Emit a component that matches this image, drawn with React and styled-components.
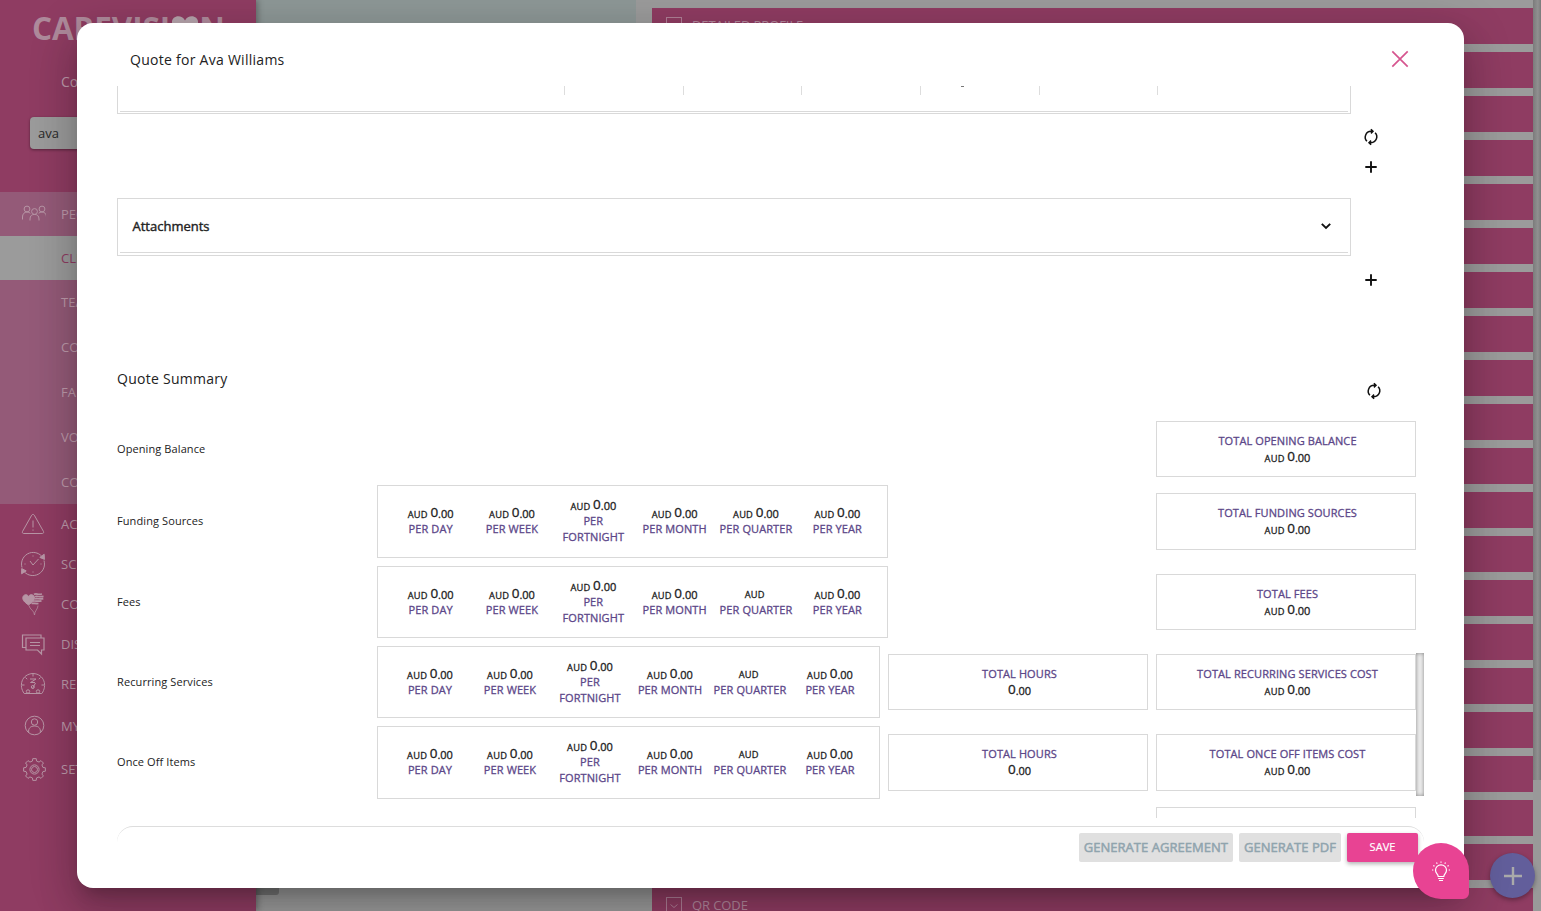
import React from "react";
import styled, { createGlobalStyle } from "styled-components";

const gearPath = (cx, cy, outer, inner, teeth) => {
  const step = (Math.PI * 2) / teeth;
  const points = [];
  for (let i = 0; i < teeth; i++) {
    const a = i * step - Math.PI / 2;
    [
      [-0.3, inner],
      [-0.2, outer],
      [0.2, outer],
      [0.3, inner],
    ].forEach(([shift, r]) => {
      const t = a + shift * step;
      points.push(
        `${(cx + r * Math.cos(t)).toFixed(2)} ${(cy + r * Math.sin(t)).toFixed(2)}`
      );
    });
  }
  return `M${points.join("L")}Z`;
};

const PeopleIcon = () => (
  <LineIcon width="26" height="26" viewBox="-1.500 0 26 26">
    <circle cx="5.5" cy="8" r="2.9" />
    <circle cx="13" cy="10.5" r="2.9" />
    <circle cx="20.5" cy="8" r="2.9" />
    <path d="M1 18.500v-2.500c0-3 1.800-5 4.500-5 1.400 0 2.600.5 3.300 1.300M8.500 19.500v-1.500c0-3 1.700-4.600 4.500-4.600s4.500 1.600 4.500 4.600v1.500M17.200 12.300c.7-.8 1.900-1.300 3.300-1.300 2.700 0 4.500 2 4.500 5v2.500" />
  </LineIcon>
);

const AlertIcon = () => (
  <LineIcon width="26" height="26" viewBox="0 0 26 26">
    <path d="M11.700 4.200 2.500 20.500c-.5 1 0 2 1.200 2h18.600c1.200 0 1.700-1 1.200-2L14.300 4.200c-.6-1-2-1-2.600 0zM13 9.500v7M13 18.500v1.200" />
  </LineIcon>
);

const ScheduleIcon = () => (
  <LineIcon width="26" height="26" viewBox="0 0 26 26">
    <path d="M2 16.500C.2 10.500 3.500 4 9.500 2 14.500.4 20 2.300 22.800 6.600M24 9.500c1.800 6-1.300 12.300-7.300 14.400C11.600 25.600 6 23.800 3.200 19.400M10 10l3 4 5.500-6M13 4.500v1M4.500 13h1M20.500 13h1M13 20.500v1" />
    <path d="m24.200 3.200.3 5.200-4.700-2zM1.600 22.800l.1-5.200 4.500 2.300z" fill="currentColor" />
  </LineIcon>
);

const HeartsIcon = () => (
  <LineIcon width="26" height="26" viewBox="0 0 26 26">
    <path
      d="M8.500 14C4.500 11 2.800 9.500 2.800 6.900c0-3.500 4.500-4.400 5.700-1.300 1.300-3.100 6-2.200 6 1.300 0 2.600-2 4.100-6 7.100z"
      fill="currentColor"
    />
    <path d="M14 3.500c2-1.500 3.500.5 8-.5M15 5.700c2-1 4 .6 8.500-.3M15 8c2-1 4 .6 8.300-.4M13 10.300c2-1 4 .6 8.500-.4M11.500 12.500c2-.6 3 .3 7 0" strokeWidth="1.700" />
    <path d="M9 14.500c.5 4 5.500 5 5.500 9.500 0-4 3.500-6 3.500-9.500" strokeWidth=".7" />
  </LineIcon>
);

const ChatIcon = () => (
  <LineIcon width="26" height="26" viewBox="0 0 26 26">
    <path d="M5.500 16.500h-3v-12.500h18.500v3M6 7h18v12h-2.500v4l-4-4H6zM10 11.500h10M10 14.500h10" strokeWidth="1.200" />
  </LineIcon>
);

const GaugeIcon = () => (
  <LineIcon width="26" height="26" viewBox="0 0 26 26">
    <path d="M4.200 22.500C-1.500 15 1.500 3 13 2.500 24.500 3 27.500 15 21.800 22.500zM13 3v2.500M5.500 6.500l1.700 1.700M20.500 6.500l-1.700 1.700M2 14h2.500M21.500 14H24M10 8h6l-5.500 3.500H15M15.500 12l-3 5.500" />
    <circle cx="8" cy="20.500" r="1.700" />
    <circle cx="12.800" cy="16" r="1.500" />
    <circle cx="18" cy="20.500" r="1.700" />
  </LineIcon>
);

const UserIcon = () => (
  <LineIcon width="26" height="26" viewBox="0 0 26 26">
    <circle cx="14.500" cy="12.500" r="9.300" />
    <circle cx="14.500" cy="9" r="3.200" />
    <path d="M8.700 19.500c-.6-4 1.600-6.500 5.800-6.500s6.400 2.500 5.800 6.500" />
  </LineIcon>
);

const GearIcon = () => (
  <LineIcon width="26" height="26" viewBox="0 0 26 26">
    <path d={gearPath(14.5, 13.5, 11, 8.700, 8)} />
    <circle cx="14.500" cy="13.500" r="4.600" />
    <circle cx="14.500" cy="13.500" r="3" />
  </LineIcon>
);

const RefreshIcon = () => (
  <svg width="18" height="18" viewBox="0 0 18 18" fill="none" stroke="#111" strokeWidth="1.500">
    <path d="M4.900 13.300A5.900 5.900 0 0 1 9 3.300h1.800M8.900 1.200 11 3.300 8.900 5.400" />
    <path d="M13.100 4.700a5.900 5.900 0 0 1-4.100 10H7.200M9.100 16.800 7 14.700l2.100-2.100" />
  </svg>
);

const PlusIcon = () => (
  <svg width="18" height="18" viewBox="0 0 18 18" stroke="#111" strokeWidth="1.900">
    <path d="M9 3.300v11.400M3.300 9h11.400" />
  </svg>
);

const CloseIcon = () => (
  <svg width="18" height="18" viewBox="0 0 18 18" stroke="#d6558f" strokeWidth="1.700">
    <path d="m1.300 1.300 15.400 15.400M16.700 1.300 1.300 16.700" />
  </svg>
);

const ChevronIcon = () => (
  <svg width="12" height="12" viewBox="0 0 12 12" fill="none" stroke="#111" strokeWidth="1.900">
    <path d="m1.800 3.800 4.200 4.200 4.200-4.200" />
  </svg>
);

const BulbIcon = () => (
  <svg width="22" height="22" viewBox="0 0 22 22" fill="none" stroke="#fff" strokeWidth="1.200">
    <path d="M8.200 15.500c0-2.300-2.700-3-2.700-6.200a5.500 5.500 0 0 1 11 0c0 3.200-2.700 3.900-2.700 6.200zM8.200 17.500h5.600M9 19.500h4" />
    <path d="M11 .5v1.300M6.500 1.500l.7 1.200M15.500 1.500l-.7 1.200M3.300 4.500l1.200.8M18.700 4.500l-1.200.8M2 9h1.300M18.700 9H20" />
  </svg>
);

const BoxedChevron = () => (
  <svg width="16" height="16" viewBox="0 0 16 16" fill="none" stroke="#b07f97">
    <rect x=".5" y=".5" width="15" height="15" />
    <path d="m4.500 7.500 3.500 3 3.500-3" />
  </svg>
);

const SUB_MENU = ["TEA", "CO", "FA", "VO", "CO"];

const MENU = [
  { label: "AC", icon: <AlertIcon /> },
  { label: "SC", icon: <ScheduleIcon /> },
  { label: "CO", icon: <HeartsIcon /> },
  { label: "DIS", icon: <ChatIcon /> },
  { label: "RE", icon: <GaugeIcon /> },
  { label: "MY", icon: <UserIcon />, height: 44 },
  { label: "SET", icon: <GearIcon />, height: 42 },
];

const PERIODS = ["DAY", "WEEK", "FORTNIGHT", "MONTH", "QUARTER", "YEAR"];

const ROWS = [
  { name: "Opening Balance", total: "TOTAL OPENING BALANCE" },
  { name: "Funding Sources", total: "TOTAL FUNDING SOURCES", periods: true },
  { name: "Fees", total: "TOTAL FEES", periods: true, noQuarter: true },
  {
    name: "Recurring Services",
    total: "TOTAL RECURRING SERVICES COST",
    periods: true,
    noQuarter: true,
    hours: true,
  },
  {
    name: "Once Off Items",
    total: "TOTAL ONCE OFF ITEMS COST",
    periods: true,
    noQuarter: true,
    hours: true,
  },
];

const PANELS = Array.from({ length: 21 }, (_, i) => {
  if (i === 0) return "DETAILED PROFILE";
  if (i === 20) return "QR CODE";
  return "";
});

const Money = ({ currency = true, empty }) => (
  <Amount>
    {currency && <Currency>AUD </Currency>}
    {!empty && (
      <>
        <Whole>0</Whole>
        <Cents>.00</Cents>
      </>
    )}
  </Amount>
);

const Sidebar = () => (
  <Side>
    <Logo>
      CAREVISI
      <svg width="28" height="25" viewBox="0 0 30 26">
        <path
          d="M15 25C6 17 1 13 1 7.500 1 0 11.500-1.500 15 5.500 18.500-1.500 29 0 29 7.500 29 13 24 17 15 25z"
          fill="#b5a3ab"
        />
      </svg>
      N
    </Logo>
    <Company>Co</Company>
    <SearchBox>ava</SearchBox>
    <Group>
      <Item $height={44}>
        <PeopleIcon />
        <span>PEO</span>
      </Item>
      <Item $height={44} $active>
        <span>CLI</span>
      </Item>
      {SUB_MENU.map((label, i) => (
        <Item key={i} $height={44.8}>
          <span>{label}</span>
        </Item>
      ))}
    </Group>
    {MENU.map(({ label, icon, height }) => (
      <Item key={label} $height={height || 40}>
        {icon}
        <span>{label}</span>
      </Item>
    ))}
  </Side>
);

const SummaryRow = ({ row }) => (
  <Row $tall={row.periods}>
    <RowName>{row.name}</RowName>
    {row.periods && (
      <PeriodBox $narrow={row.hours}>
        {PERIODS.map((period) => (
          <Period key={period}>
            <Money empty={row.noQuarter && period === "QUARTER"} />
            <Caption>PER {period}</Caption>
          </Period>
        ))}
      </PeriodBox>
    )}
    <Totals>
      {row.hours && (
        <TotalBox>
          <Caption>TOTAL HOURS</Caption>
          <Money currency={false} />
        </TotalBox>
      )}
      <TotalBox>
        <Caption>{row.total}</Caption>
        <Money />
      </TotalBox>
    </Totals>
  </Row>
);

const QuoteModal = () => (
  <Modal>
    <ModalHeader>
      <Title>Quote for Ava Williams</Title>
      <CloseIcon />
    </ModalHeader>
    <ModalBody>
      <TableEnd>
        <Columns>
          <span />
          <span />
          <span />
          <span />
          <span />
          <span />
        </Columns>
        <Speck />
      </TableEnd>
      <Actions $height={84} $top={14}>
        <RefreshIcon />
        <PlusIcon />
      </Actions>
      <Attachments>
        <div>
          Attachments
          <ChevronIcon />
        </div>
      </Attachments>
      <Actions $height={105} $top={15}>
        <PlusIcon />
      </Actions>
      <SummaryHead>
        <Title>Quote Summary</Title>
        <RefreshIcon />
      </SummaryHead>
      <Summary>
        {ROWS.map((row) => (
          <SummaryRow key={row.name} row={row} />
        ))}
        <Row>
          <Totals>
            <TotalBox />
          </Totals>
        </Row>
      </Summary>
    </ModalBody>
    <ModalFooter>
      <Button>GENERATE AGREEMENT</Button>
      <Button>GENERATE PDF</Button>
      <SaveButton>SAVE</SaveButton>
    </ModalFooter>
    <InnerScroll />
  </Modal>
);

const App = () => (
  <Page>
    <GlobalStyle />
    <Sidebar />
    <Middle>
      <Photo />
      <Tab />
    </Middle>
    <Panels>
      {PANELS.map((label, i) => (
        <Panel key={i}>
          {label && <BoxedChevron />}
          {label}
        </Panel>
      ))}
    </Panels>
    <PageScroll>
      <div />
    </PageScroll>
    <AddFab>
      <svg width="18" height="18" viewBox="0 0 18 18" stroke="#aaa" strokeWidth="2.400">
        <path d="M9 0v18M0 9h18" />
      </svg>
    </AddFab>
    <QuoteModal />
    <BulbFab>
      <BulbIcon />
    </BulbFab>
  </Page>
);

const GlobalStyle = createGlobalStyle`
  * {
    box-sizing: border-box;
  }
  body {
    margin: 0;
    overflow: hidden;
    font-family: "Open Sans", "Noto Sans", sans-serif;
    color: #222;
  }
  svg {
    flex-shrink: 0;
  }
`;

const Page = styled.div`
  position: relative;
  display: flex;
  height: 911px;
  overflow: hidden;
  background: #9b9b9b;
`;

const Side = styled.aside`
  width: 256px;
  background: #8f3c62;
  color: #be9bab;
  box-shadow: 2px 0 6px rgba(0, 0, 0, 0.3);
  z-index: 1;
`;

const LineIcon = styled.svg`
  fill: none;
  stroke: currentColor;
  color: #b795a5;
`;

const Logo = styled.div`
  display: flex;
  align-items: center;
  height: 54px;
  padding-left: 32px;
  font-size: 31.500px;
  font-weight: 700;
  letter-spacing: -0.1px;
  color: #ae8a9b;
  svg {
    margin: 0 0 0 1px;
  }
`;

const Company = styled.div`
  height: 63px;
  padding: 18px 0 0 61px;
  font-size: 14px;
  line-height: 20px;
`;

const SearchBox = styled.div`
  width: 196px;
  height: 32px;
  margin: 0 30px 43px;
  padding-left: 8px;
  border-radius: 4px;
  background: #9b9b9b;
  box-shadow: 0 1px 3px rgba(0, 0, 0, 0.4);
  color: #2a2a2a;
  font-size: 13px;
  line-height: 32px;
`;

const Group = styled.div`
  background: #945a78;
`;

const Item = styled.div`
  display: flex;
  align-items: center;
  height: ${(props) => props.$height}px;
  padding-left: 20px;
  font-size: 13px;
  background: ${(props) => (props.$active ? "#9b9b9b" : "none")};
  color: ${(props) => (props.$active ? "#8f3c62" : "inherit")};
  span {
    margin-left: 15px;
  }
  span:first-child {
    margin-left: 41px;
  }
`;

const Middle = styled.div`
  width: 396px;
  display: flex;
  flex-direction: column;
  justify-content: space-between;
`;

const Photo = styled.div`
  width: 380px;
  height: 60px;
  background: #8d9796;
`;

const Tab = styled.div`
  width: 23px;
  height: 40px;
  margin-bottom: 16px;
  border-radius: 0 0 3px 0;
  background: #777;
`;

const Panels = styled.div`
  width: 881px;
  padding-top: 8px;
`;

const Panel = styled.div`
  display: flex;
  align-items: center;
  gap: 10px;
  height: 36px;
  margin-bottom: 8px;
  padding: 0 0 2px 14px;
  background: #8f3c62;
  color: #b48a9e;
  font-size: 13px;
  letter-spacing: -0.1px;
`;

const PageScroll = styled.div`
  width: 8px;
  background: #999;
  div {
    height: 780px;
    background: linear-gradient(90deg, #7b7b7b, #909090 60%, #7b7b7b);
  }
`;

const AddFab = styled.div`
  position: absolute;
  left: 1490px;
  top: 853px;
  display: flex;
  align-items: center;
  justify-content: center;
  width: 45px;
  height: 45px;
  border-radius: 50%;
  background: #625e9b;
  box-shadow: 0 2px 5px rgba(0, 0, 0, 0.35);
`;

const Modal = styled.div`
  position: absolute;
  left: 77px;
  top: 23px;
  z-index: 2;
  width: 1387px;
  height: 865px;
  padding-left: 40px;
  border-radius: 16px;
  background: #fff;
  box-shadow: 0 11px 15px -7px rgba(0, 0, 0, 0.2),
    0 24px 38px 3px rgba(0, 0, 0, 0.14), 0 9px 46px 8px rgba(0, 0, 0, 0.12);
`;

const ModalHeader = styled.div`
  display: flex;
  justify-content: space-between;
  height: 63px;
  padding: 27px 55px 0 13px;
`;

const Title = styled.div`
  font-size: 14px;
  line-height: 20px;
  letter-spacing: 0.27px;
`;

const ModalBody = styled.div`
  height: 732px;
  overflow: hidden;
`;

const TableEnd = styled.div`
  position: relative;
  width: 1234px;
  height: 28px;
  padding: 0 2px 2px;
  border: 1px solid #d9d9d9;
  border-top: none;
`;

const Columns = styled.div`
  display: flex;
  height: 26px;
  padding-left: 444px;
  border-bottom: 1px solid #d9d9d9;
  span {
    width: 118.700px;
    height: 9px;
    border-left: 1px solid #ddd;
  }
`;

/* last visible pixels of the scrolled away header text */
const Speck = styled.div`
  position: absolute;
  left: 843px;
  top: 0;
  width: 3px;
  height: 1px;
  background: #777;
`;

const Actions = styled.div`
  display: flex;
  flex-direction: column;
  align-items: center;
  gap: 12px;
  width: 40px;
  height: ${(props) => props.$height}px;
  margin-left: 1234px;
  padding-top: ${(props) => props.$top}px;
`;

const Attachments = styled.div`
  width: 1234px;
  height: 58px;
  padding: 2px;
  border: 1px solid #d9d9d9;
  div {
    display: flex;
    align-items: center;
    justify-content: space-between;
    height: 52px;
    padding: 0 16.500px 1px 12.500px;
    border-bottom: 1px solid #d9d9d9;
    font-size: 13px;
    -webkit-text-stroke: 0.4px #222;
  }
`;

const SummaryHead = styled.div`
  display: flex;
  justify-content: space-between;
  width: 1266px;
  height: 55.900px;
  padding-top: 8px;
  svg {
    margin-top: 13px;
  }
`;

const Summary = styled.div`
  width: 1299px;
`;

const Row = styled.div`
  display: flex;
  align-items: center;
  height: ${(props) => (props.$tall ? 80.35 : 64.3)}px;
`;

const RowName = styled.div`
  width: 260px;
  padding-bottom: 1px;
  font-size: 11px;
  letter-spacing: 0.1px;
`;

const Box = styled.div`
  border: 1px solid #d9d9d9;
  font-size: 11px;
  line-height: 16px;
  text-align: center;
`;

const PeriodBox = styled(Box)`
  display: flex;
  align-items: center;
  width: ${(props) => (props.$narrow ? 503 : 511)}px;
  height: 72.350px;
  padding: 0 9px 0 12px;
`;

const Period = styled.div`
  flex: 1 1 0;
  min-width: 0;
  padding: 0 2px;
`;

const Totals = styled.div`
  display: flex;
  gap: 8px;
  margin-left: auto;
`;

const TotalBox = styled(Box)`
  width: 260px;
  height: 56.300px;
  padding: 11px 0 0 3px;
`;

const Caption = styled.div`
  color: #5c4789;
  letter-spacing: 0.1px;
  -webkit-text-stroke: 0.3px #5c4789;
`;

const Amount = styled.div`
  height: 16px;
  white-space: pre-wrap;
  color: #222;
  -webkit-text-stroke: 0.3px #222;
`;

const Currency = styled.span`
  font-size: 9.300px;
  letter-spacing: 0.2px;
`;

const Whole = styled.span`
  font-size: 13.500px;
  position: relative;
  top: -1px;
`;

const Cents = styled.span`
  font-size: 11px;
`;

const ModalFooter = styled.div`
  display: flex;
  justify-content: flex-end;
  gap: 6px;
  width: 1307px;
  height: 60px;
  margin-top: 8px;
  padding: 6px 6px 0 0;
  border-top: 1px solid #ddd;
  border-radius: 16px 16px 0 0;
`;

const Button = styled.button`
  height: 29px;
  padding: 0 5px 2px;
  border: none;
  border-radius: 2px;
  background: #e0e0e0;
  color: #90a4ae;
  font-family: inherit;
  font-size: 13px;
  letter-spacing: 0.03px;
  -webkit-text-stroke: 0.5px #90a4ae;
`;

const SaveButton = styled(Button)`
  width: 71px;
  background: #e84393;
  color: #fff;
  font-size: 11px;
  -webkit-text-stroke: 0.2px #fff;
  box-shadow: 0 2px 4px rgba(0, 0, 0, 0.3);
`;

const InnerScroll = styled.div`
  position: absolute;
  left: 1339px;
  top: 630px;
  width: 8px;
  height: 143px;
  background: #eee;
  box-shadow: inset 0 0 4px rgba(0, 0, 0, 0.45);
`;

const BulbFab = styled.div`
  position: absolute;
  left: 1413px;
  top: 843px;
  z-index: 3;
  display: flex;
  align-items: center;
  justify-content: center;
  width: 56px;
  height: 56px;
  padding-top: 2px;
  border-radius: 50% 50% 6px 50%;
  background: #e84393;
`;

export default App;
